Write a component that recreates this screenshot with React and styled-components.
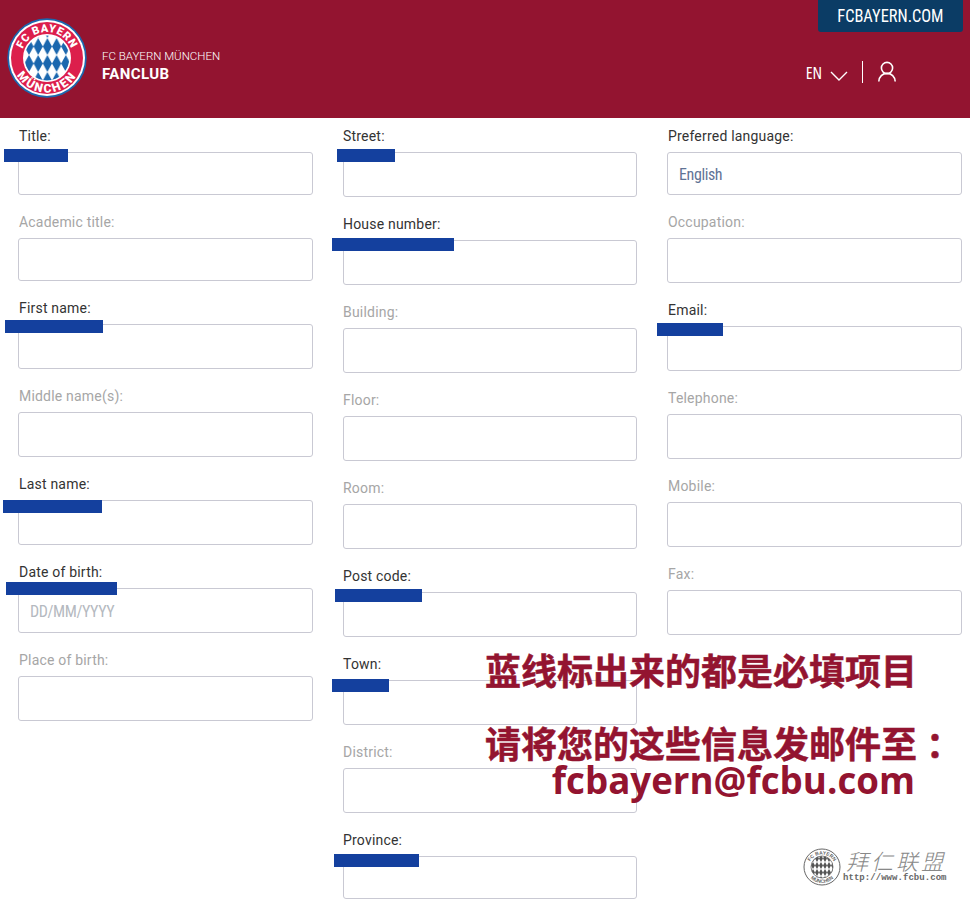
import React from 'react';
import styled, { createGlobalStyle } from 'styled-components';

const GlobalStyle = createGlobalStyle`
  html, body {
    margin: 0;
    padding: 0;
    background: #fff;
    overflow: hidden;
  }
  * {
    box-sizing: border-box;
  }
`;

const Page = styled.div`
  position: relative;
  width: 970px;
  height: 909px;
  overflow: hidden;
  font-family: Roboto, "Liberation Sans", sans-serif;
`;

const Header = styled.header`
  display: flex;
  justify-content: space-between;
  height: 118px;
  background: #931430;
  color: #fff;
`;

const Brand = styled.div`
  display: flex;
  align-items: flex-start;
  padding: 18px 0 0 7px;
`;

const BrandText = styled.div`
  margin: 31px 0 0 15px;
`;

const ClubName = styled.div`
  font-size: 11.5px;
  line-height: 15px;
  font-weight: 300;
  white-space: nowrap;
`;

const ClubSection = styled.div`
  margin-top: 2px;
  font-size: 15px;
  line-height: 16px;
  font-weight: 700;
  letter-spacing: 0.4px;
`;

const HeaderRight = styled.div`
  display: flex;
  flex-direction: column;
  align-items: flex-end;
  padding-right: 7px;
`;

const SiteTab = styled.a`
  display: block;
  width: 145px;
  height: 32px;
  background: #0b3c65;
  border-radius: 0 0 3px 3px;
  font-stretch: 75%;
  font-size: 18px;
  line-height: 32px;
  text-align: center;
  color: #fff;
`;

const SiteTabText = styled.span`
  display: inline-block;
  transform: scaleX(0.91);
`;

const AccountRow = styled.div`
  display: flex;
  align-items: center;
  height: 22px;
  margin: 29px 67px 0 0;
`;

const Lang = styled.span`
  font-family: "Open Sans", sans-serif;
  font-stretch: 75%;
  font-size: 17px;
  line-height: 24px;
  margin: 1px 8px 0 2px;
`;

const Divider = styled.span`
  width: 1px;
  height: 22px;
  margin: 0 15px 0 14px;
  background: #fff;
`;

const Columns = styled.main`
  display: flex;
  gap: 30px;
  padding-left: 18px;
`;

const Column = styled.div`
  width: ${(p) => p.$width}px;
`;

const Field = styled.div`
  margin-bottom: 9px;
`;

const Label = styled.label`
  display: block;
  height: 34px;
  padding: 10px 0 0 ${(p) => p.$inset}px;
  font-size: 14px;
  line-height: 17px;
  letter-spacing: 0.2px;
  color: ${(p) => (p.$required ? '#333' : '#a6a6a6')};
`;

const Control = styled.div`
  position: relative;
`;

const Input = styled.input`
  display: block;
  width: 100%;
  height: ${(p) => p.$height}px;
  padding: 2px 11px 0;
  background: #fff;
  border: 1px solid #c9c9d3;
  border-radius: 3px;
  outline: none;
  font-family: Roboto, sans-serif;
  font-stretch: 75%;
  font-size: 16px;
  letter-spacing: -0.4px;
  color: #5f7396;

  &::placeholder {
    color: #b4b9c0;
    opacity: 1;
  }
`;

const BlueMark = styled.span`
  position: absolute;
  top: ${(p) => p.$top}px;
  left: ${(p) => p.$left}px;
  width: ${(p) => p.$width}px;
  height: 13px;
  background: #14409e;
`;

const Notice = styled.div`
  position: absolute;
  top: 651px;
  left: 485px;
  width: 430px;
  color: #931430;
  font-family: "Noto Sans CJK SC", "Noto Sans", sans-serif;
  font-weight: 700;
`;

const NoticeLine = styled.div`
  font-size: 36px;
  line-height: 36px;
  white-space: nowrap;
  -webkit-text-stroke: 0.5px #931430;
  margin-bottom: ${(p) => p.$gap || 0}px;
`;

const NoticeColon = styled.span`
  margin-left: 9px;
`;

const NoticeMail = styled.div`
  margin-top: 3px;
  font-family: "Open Sans", "Noto Sans", sans-serif;
  font-size: 36.7px;
  line-height: 34px;
  text-align: right;
  white-space: nowrap;
`;

const Watermark = styled.div`
  position: absolute;
  top: 848px;
  left: 803px;
  display: flex;
  color: #666;
`;

const WatermarkText = styled.div`
  margin-left: 2px;
`;

const WatermarkName = styled.div`
  font-family: "Noto Sans CJK SC", sans-serif;
  font-weight: 300;
  font-size: 22px;
  line-height: 24px;
  letter-spacing: 3px;
  margin-left: 3px;
  font-style: italic;
  color: #888;
`;

const WatermarkUrl = styled.div`
  font-family: "Liberation Mono", monospace;
  font-size: 9px;
  line-height: 12px;
  letter-spacing: 0.05px;
  font-weight: 700;
  color: #666;
`;

const columns = [
  {
    width: 295,
    inset: 1,
    fields: [
      { label: 'Title:', height: 43, mark: [-14, -3, 64] },
      { label: 'Academic title:', height: 43 },
      { label: 'First name:', height: 45, mark: [-13, -4, 98] },
      { label: 'Middle name(s):', height: 45 },
      { label: 'Last name:', height: 45, mark: [-15, 0, 99] },
      { label: 'Date of birth:', height: 45, mark: [-12, -6, 111], placeholder: 'DD/MM/YYYY' },
      { label: 'Place of birth:', height: 45 },
    ],
  },
  {
    width: 294,
    inset: 0,
    fields: [
      { label: 'Street:', height: 45, mark: [-6, -3, 58] },
      { label: 'House number:', height: 45, mark: [-11, -2, 122] },
      { label: 'Building:', height: 45 },
      { label: 'Floor:', height: 45 },
      { label: 'Room:', height: 45 },
      { label: 'Post code:', height: 45, mark: [-8, -3, 87] },
      { label: 'Town:', height: 45, mark: [-11, -1, 57] },
      { label: 'District:', height: 45 },
      { label: 'Province:', height: 43, mark: [-9, -2, 85] },
    ],
  },
  {
    width: 295,
    inset: 1,
    fields: [
      { label: 'Preferred language:', height: 43, value: 'English', required: true },
      { label: 'Occupation:', height: 45 },
      { label: 'Email:', height: 45, mark: [-10, -3, 66] },
      { label: 'Telephone:', height: 45 },
      { label: 'Mobile:', height: 45 },
      { label: 'Fax:', height: 45 },
    ],
  },
];

const Logo = () => (
  <svg width="80" height="80" viewBox="0 0 80 80">
    <defs>
      <pattern id="rhombs" width="9.2" height="17" patternUnits="userSpaceOnUse" x="-1" y="3">
        <rect width="9.2" height="17" fill="#fff" />
        <polygon points="4.6,0 9.2,8.5 4.6,17 0,8.5" fill="#1b67ae" />
      </pattern>
      <path id="logoTop" d="M 17.48 53 A 26 26 0 1 1 62.52 53" />
      <path id="logoBottom" d="M 10.12 22.75 A 34.5 34.5 0 1 0 69.88 22.75" />
    </defs>
    <circle cx="40" cy="40" r="39.7" fill="#1b67ae" />
    <circle cx="40" cy="40" r="38" fill="#fff" />
    <circle cx="40" cy="40" r="36" fill="#dc1f4c" />
    <circle cx="40" cy="40" r="24" fill="#fff" />
    <circle cx="40" cy="40" r="22.4" fill="url(#rhombs)" />
    <text fontFamily="Roboto, sans-serif" fontWeight="900" fontSize="11" letterSpacing="0.6" fill="#fff">
      <textPath href="#logoTop" startOffset="50%" textAnchor="middle">FC BAYERN</textPath>
    </text>
    <text fontFamily="Roboto, sans-serif" fontWeight="900" fontSize="12" letterSpacing="2" fill="#fff">
      <textPath href="#logoBottom" startOffset="50%" textAnchor="middle">MÜNCHEN</textPath>
    </text>
  </svg>
);

const Chevron = () => (
  <svg width="18" height="10" viewBox="0 0 18 10" style={{ marginTop: 8 }}>
    <polyline points="1,1 9,9 17,1" fill="none" stroke="#fff" strokeWidth="1.4" />
  </svg>
);

const UserIcon = () => (
  <svg width="18" height="22" viewBox="0 0 18 22" fill="none" stroke="#fff" strokeWidth="1.6">
    <circle cx="9" cy="7" r="5.6" />
    <path d="M 0.8 20.5 C 1 15.5 4.5 12.4 9 12.4 C 13.5 12.4 17 15.5 17.2 20.5" />
  </svg>
);

const WatermarkSeal = () => (
  <svg width="38" height="38" viewBox="0 0 38 38">
    <defs>
      <pattern id="sealHatch" width="4" height="7" patternUnits="userSpaceOnUse">
        <rect width="4" height="7" fill="#fff" />
        <polygon points="2,0 4,3.5 2,7 0,3.5" fill="#555" />
      </pattern>
      <path id="sealTop" d="M 5.5 20 A 13.5 13.5 0 0 1 32.5 20" />
      <path id="sealBottom" d="M 3 19 A 16 16 0 0 0 35 19" />
    </defs>
    <circle cx="19" cy="19" r="18" fill="#fff" stroke="#666" strokeWidth="1" />
    <circle cx="19" cy="19" r="11" fill="url(#sealHatch)" stroke="#666" strokeWidth="0.8" />
    <text fontFamily="Liberation Sans, sans-serif" fontSize="5" fontWeight="700" fill="#666">
      <textPath href="#sealTop" startOffset="50%" textAnchor="middle">FC BAYERN</textPath>
    </text>
    <text fontFamily="Liberation Sans, sans-serif" fontSize="5" fontWeight="700" fill="#666">
      <textPath href="#sealBottom" startOffset="50%" textAnchor="middle">MÜNCHEN</textPath>
    </text>
  </svg>
);

const App = () => (
  <Page>
    <GlobalStyle />
    <Header>
      <Brand>
        <Logo />
        <BrandText>
          <ClubName>FC BAYERN MÜNCHEN</ClubName>
          <ClubSection>FANCLUB</ClubSection>
        </BrandText>
      </Brand>
      <HeaderRight>
        <SiteTab><SiteTabText>FCBAYERN.COM</SiteTabText></SiteTab>
        <AccountRow>
          <Lang>EN</Lang>
          <Chevron />
          <Divider />
          <UserIcon />
        </AccountRow>
      </HeaderRight>
    </Header>
    <Columns>
      {columns.map((column) => (
        <Column key={column.fields[0].label} $width={column.width}>
          {column.fields.map((field) => (
            <Field key={field.label}>
              <Label $inset={column.inset} $required={field.mark || field.required}>{field.label}</Label>
              <Control>
                <Input
                  $height={field.height}
                  placeholder={field.placeholder}
                  defaultValue={field.value}
                  readOnly
                />
                {field.mark && (
                  <BlueMark $left={field.mark[0]} $top={field.mark[1]} $width={field.mark[2]} />
                )}
              </Control>
            </Field>
          ))}
        </Column>
      ))}
    </Columns>
    <Notice>
      <NoticeLine $gap={37}>蓝线标出来的都是必填项目</NoticeLine>
      <NoticeLine>请将您的这些信息发邮件至<NoticeColon>：</NoticeColon></NoticeLine>
      <NoticeMail>fcbayern@fcbu.com</NoticeMail>
    </Notice>
    <Watermark>
      <WatermarkSeal />
      <WatermarkText>
        <WatermarkName>拜仁联盟</WatermarkName>
        <WatermarkUrl>http://www.fcbu.com</WatermarkUrl>
      </WatermarkText>
    </Watermark>
  </Page>
);

export default App;
